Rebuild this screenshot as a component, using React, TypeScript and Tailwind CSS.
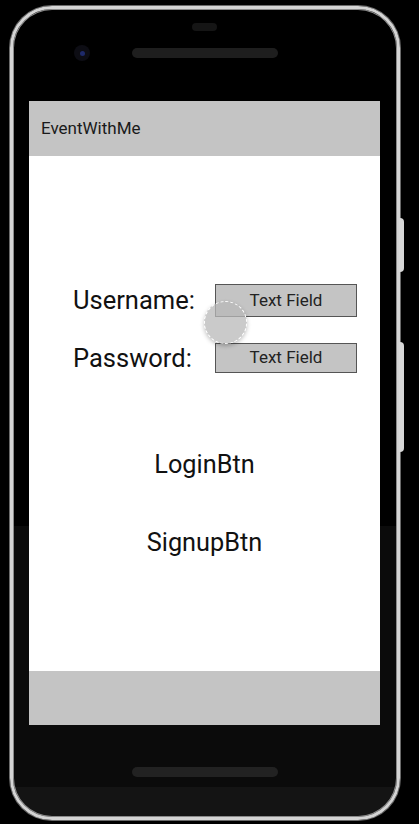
export default function App() {
  return (
    <div className="w-[419px] h-[824px] bg-black pt-[6px] pl-[10px] font-['Roboto',sans-serif]">
      <div className="relative w-[390px] h-[814px] rounded-[42px] border-[3px] border-[#d4d4d4] shadow-[inset_0_0_0_1px_#8a8a8a,0_0_0_1px_#6a6a6a] bg-[linear-gradient(to_bottom,#000_0%,#000_64%,#0b0b0b_64%,#0b0b0b_96.3%,#141414_96.3%)]">
        {/* side buttons */}
        <div className="absolute -right-[7px] top-[209px] w-[5px] h-[54px] rounded-r-sm bg-[#d8d8d8]" />
        <div className="absolute -right-[7px] top-[333px] w-[5px] h-[110px] rounded-r-sm bg-[#d8d8d8]" />

        {/* top bezel */}
        <div className="relative h-[92px]">
          <div className="absolute left-[179px] top-[14px] w-[25px] h-[8px] rounded-full bg-[#151515]" />
          <div className="absolute left-[61px] top-[36px] w-[16px] h-[16px] rounded-full bg-[#0d0d14] flex items-center justify-center">
            <div className="w-[5px] h-[5px] rounded-full bg-[#1e2a6a]" />
          </div>
          <div className="absolute left-[119px] top-[39px] w-[146px] h-[10px] rounded-full bg-[#1e1e1e]" />
        </div>

        {/* screen */}
        <div className="relative ml-[16px] w-[351px] h-[624px] flex flex-col bg-white">
          <div className="h-[55px] bg-[#c4c4c4] flex items-center pl-[12px] text-[17px] text-[#1a1a1a]">
            EventWithMe
          </div>
          <div className="flex-1 flex flex-col pt-[128px] text-[#111]">
            <div className="flex items-center h-[33px]">
              <div className="w-[186px] pl-[44px] text-[25.5px] whitespace-nowrap">Username:</div>
              <div className="w-[142px] h-[33px] bg-[#c4c4c4] border border-[#555] flex items-center justify-center text-[17px] text-[#222]">
                Text Field
              </div>
            </div>
            <div className="flex items-center h-[30px] mt-[26px]">
              <div className="w-[186px] pl-[44px] text-[25.5px] whitespace-nowrap">Password:</div>
              <div className="w-[142px] h-[30px] bg-[#c4c4c4] border border-[#555] flex items-center justify-center text-[17px] text-[#222]">
                Text Field
              </div>
            </div>
            <div className="mt-[78px] text-center text-[25.3px] leading-[28px]">LoginBtn</div>
            <div className="mt-[50px] text-center text-[25.3px] leading-[28px]">SignupBtn</div>
          </div>
          <div className="h-[54px] bg-[#c4c4c4]" />

          {/* touch indicator */}
          <div className="absolute left-[175px] top-[200px] w-[43px] h-[43px] rounded-full bg-[#b8b8b8]/75 border border-dashed border-white shadow-[0_2px_4px_rgba(0,0,0,0.25)]" />
        </div>

        {/* bottom bezel */}
        <div className="relative h-[90px]">
          <div className="absolute left-[119px] top-[42px] w-[146px] h-[10px] rounded-full bg-[#222]" />
        </div>
      </div>
    </div>
  );
}
